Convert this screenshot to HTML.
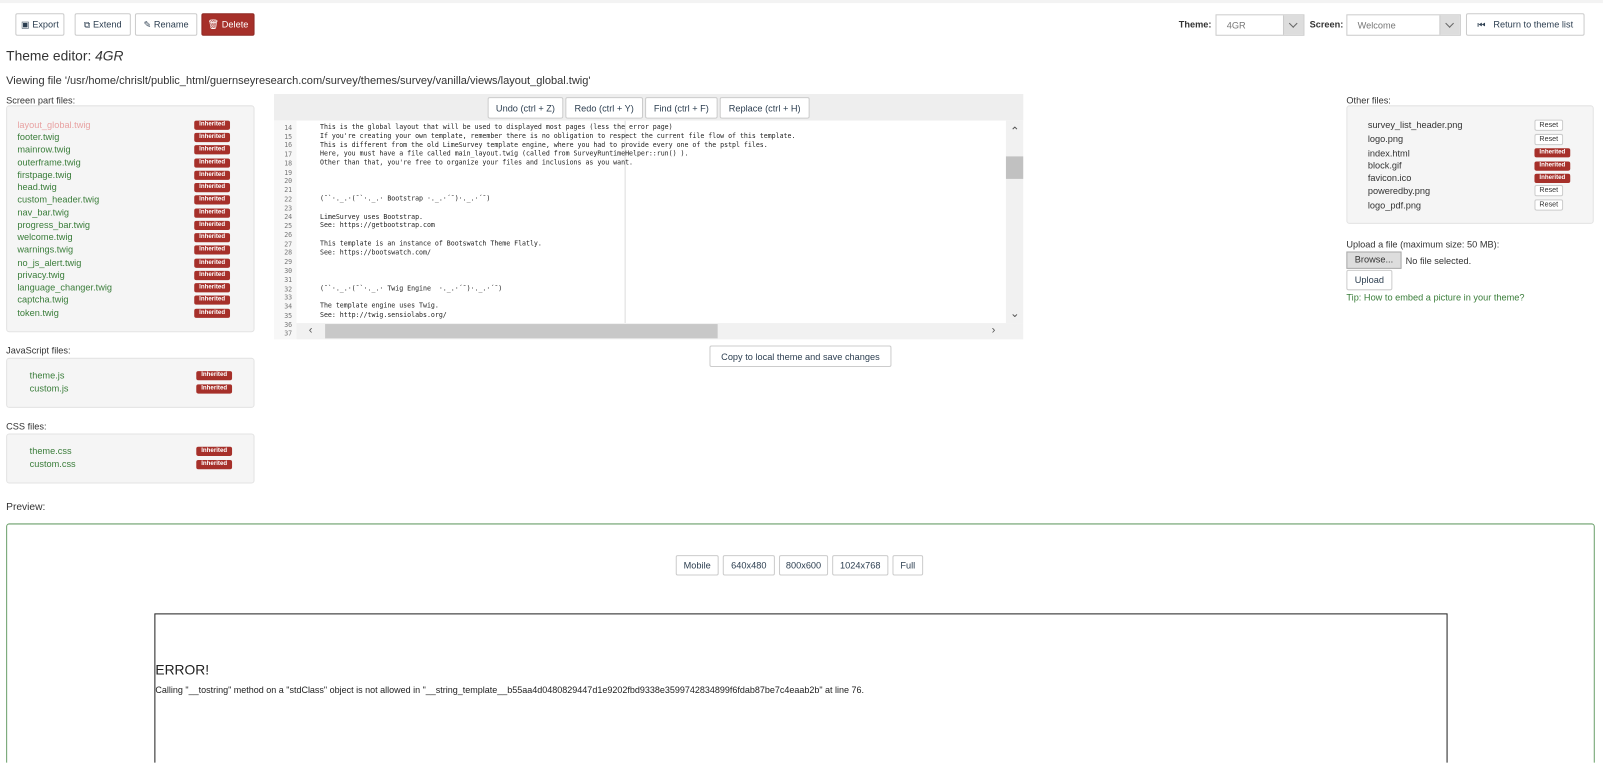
<!DOCTYPE html>
<html><head><meta charset="utf-8"><style>
*{box-sizing:border-box;margin:0;padding:0}
html,body{width:1603px;height:763px;overflow:hidden;background:#fff}
#w{position:absolute;left:0;top:0;width:1568px;height:746px;overflow:hidden;transform:scale(1.0223);transform-origin:0 0;font-family:"Liberation Sans",sans-serif;color:#333;font-size:9px}
.a{position:absolute}
.btn{position:absolute;border:1px solid #ccc;border-radius:2px;background:#fff;font-size:9px;color:#2c3e50;display:flex;align-items:center;justify-content:center;white-space:nowrap}
.red{background:#a6302a;color:#fff;border-color:#8e2823}
.panel{position:absolute;background:#f5f5f5;border:1px solid #e3e3e3;border-radius:3px}
.g{position:absolute;color:#3a7d3a;font-size:9px}
.bd{position:absolute;background:#a6302a;color:#fff;font-size:6px;font-weight:bold;width:35px;height:9px;line-height:9px;text-align:center;border-radius:2px}
.rs{position:absolute;background:#fff;border:1px solid #ccc;color:#333;font-size:7px;width:28px;height:11px;line-height:9px;text-align:center;border-radius:2px}
.lbl{position:absolute;font-size:9px;color:#333}
.code{position:absolute;font-family:"DejaVu Sans Mono","Liberation Mono",monospace;font-size:6.45px;line-height:8.76px;white-space:pre;color:#222}
.sel{position:absolute;border:1px solid #ccc;background:#fff;font-size:9px;color:#777;padding-left:10px;display:flex;align-items:center}
.sel i{position:absolute;right:0;top:0;bottom:0;width:20px;background:#ddd;border-left:1px solid #ccc}
.sel i:after{content:"";position:absolute;left:6px;top:5px;width:5px;height:5px;border-right:1.5px solid #666;border-bottom:1.5px solid #666;transform:rotate(45deg)}
</style></head><body><div id="w">
<div class="a" style="left:0;top:0;width:1568px;height:3px;background:#f3f3f3"></div>
<div class="btn" style="left:15px;top:13px;width:48px;height:22px">&#9635; Export</div>
<div class="btn" style="left:73px;top:13px;width:55px;height:22px">&#10697; Extend</div>
<div class="btn" style="left:132px;top:13px;width:61px;height:22px">&#9998; Rename</div>
<div class="btn red" style="left:197px;top:13px;width:52px;height:22px">&#128465; Delete</div>

<div class="lbl" style="left:1153px;top:19px;font-weight:bold">Theme:</div>
<div class="sel" style="left:1189px;top:14px;width:87px;height:21px">4GR<i></i></div>
<div class="lbl" style="left:1281px;top:19px;font-weight:bold">Screen:</div>
<div class="sel" style="left:1317px;top:14px;width:112px;height:21px">Welcome<i></i></div>
<div class="btn" style="left:1434px;top:13px;width:116px;height:22px">&#9198;&nbsp;&nbsp;&nbsp;Return to theme list</div>

<div class="a" style="left:6px;top:47px;font-size:13.5px;color:#333">Theme editor: <i>4GR</i></div>
<div class="a" style="left:6px;top:73px;font-size:10.8px;color:#333">Viewing file '/usr/home/chrislt/public_html/guernseyresearch.com/survey/themes/survey/vanilla/views/layout_global.twig'</div>

<div class="lbl" style="left:6px;top:93px">Screen part files:</div>
<div class="panel" style="left:6px;top:103px;width:243px;height:222px"></div>
<div class="g" style="left:17px;top:117px;color:#e8a3a3">layout_global.twig</div>
<div class="g" style="left:17px;top:129px">footer.twig</div>
<div class="g" style="left:17px;top:141px">mainrow.twig</div>
<div class="g" style="left:17px;top:154px">outerframe.twig</div>
<div class="g" style="left:17px;top:166px">firstpage.twig</div>
<div class="g" style="left:17px;top:178px">head.twig</div>
<div class="g" style="left:17px;top:190px">custom_header.twig</div>
<div class="g" style="left:17px;top:203px">nav_bar.twig</div>
<div class="g" style="left:17px;top:215px">progress_bar.twig</div>
<div class="g" style="left:17px;top:227px">welcome.twig</div>
<div class="g" style="left:17px;top:239px">warnings.twig</div>
<div class="g" style="left:17px;top:252px">no_js_alert.twig</div>
<div class="g" style="left:17px;top:264px">privacy.twig</div>
<div class="g" style="left:17px;top:276px">language_changer.twig</div>
<div class="g" style="left:17px;top:288px">captcha.twig</div>
<div class="g" style="left:17px;top:301px">token.twig</div>
<div class="bd" style="left:190px;top:118px">Inherited</div>
<div class="bd" style="left:190px;top:130px">Inherited</div>
<div class="bd" style="left:190px;top:142px">Inherited</div>
<div class="bd" style="left:190px;top:155px">Inherited</div>
<div class="bd" style="left:190px;top:167px">Inherited</div>
<div class="bd" style="left:190px;top:179px">Inherited</div>
<div class="bd" style="left:190px;top:191px">Inherited</div>
<div class="bd" style="left:190px;top:204px">Inherited</div>
<div class="bd" style="left:190px;top:216px">Inherited</div>
<div class="bd" style="left:190px;top:228px">Inherited</div>
<div class="bd" style="left:190px;top:240px">Inherited</div>
<div class="bd" style="left:190px;top:253px">Inherited</div>
<div class="bd" style="left:190px;top:265px">Inherited</div>
<div class="bd" style="left:190px;top:277px">Inherited</div>
<div class="bd" style="left:190px;top:289px">Inherited</div>
<div class="bd" style="left:190px;top:302px">Inherited</div>

<div class="lbl" style="left:6px;top:338px">JavaScript files:</div>
<div class="panel" style="left:6px;top:350px;width:243px;height:49px"></div>
<div class="g" style="left:29px;top:362px">theme.js</div>
<div class="g" style="left:29px;top:375px">custom.js</div>
<div class="bd" style="left:192px;top:363px">Inherited</div>
<div class="bd" style="left:192px;top:376px">Inherited</div>

<div class="lbl" style="left:6px;top:412px">CSS files:</div>
<div class="panel" style="left:6px;top:424px;width:243px;height:49px"></div>
<div class="g" style="left:29px;top:436px">theme.css</div>
<div class="g" style="left:29px;top:449px">custom.css</div>
<div class="bd" style="left:192px;top:437px">Inherited</div>
<div class="bd" style="left:192px;top:450px">Inherited</div>

<div class="a" style="left:268px;top:92px;width:733px;height:26px;background:#eee"></div>
<div class="btn" style="left:477px;top:95px;width:74px;height:21px">Undo (ctrl + Z)</div>
<div class="btn" style="left:553px;top:95px;width:76px;height:21px">Redo (ctrl + Y)</div>
<div class="btn" style="left:631px;top:95px;width:71px;height:21px">Find (ctrl + F)</div>
<div class="btn" style="left:704px;top:95px;width:88px;height:21px">Replace (ctrl + H)</div>
<div class="a" style="left:268px;top:118px;width:733px;height:214px;background:#fff;overflow:hidden">
<div class="a" style="left:0;top:0;width:22px;height:214px;background:#f7f7f7"></div>
<div class="a" style="left:343px;top:0;width:1px;height:198px;background:#ddd"></div>
<div class="code" style="left:10px;top:-6px;color:#777">13
14
15
16
17
18
19
20
21
22
23
24
25
26
27
28
29
30
31
32
33
34
35
36
37</div>
<div class="code" style="left:45px;top:2px">This is the global layout that will be used to displayed most pages (less the error page)
If you're creating your own template, remember there is no obligation to respect the current file flow of this template.
This is different from the old LimeSurvey template engine, where you had to provide every one of the pstpl files.
Here, you must have a file called main_layout.twig (called from SurveyRuntimeHelper::run() ).
Other than that, you're free to organize your files and inclusions as you want.



(¯`·._.·(¯`·._.· Bootstrap ·._.·´¯)·._.·´¯)

LimeSurvey uses Bootstrap.
See: https://getbootstrap.com

This template is an instance of Bootswatch Theme Flatly.
See: https://bootswatch.com/



(¯`·._.·(¯`·._.· Twig Engine  ·._.·´¯)·._.·´¯)

The template engine uses Twig.
See: http://twig.sensiolabs.org/</div>
<div class="a" style="left:716px;top:0;width:17px;height:198px;background:#f1f1f1"></div>
<div class="a" style="left:716px;top:35px;width:17px;height:22px;background:#c1c1c1"></div>
<div class="a" style="left:720px;top:4px;font-size:11px;color:#555">&#8963;</div>
<div class="a" style="left:720px;top:182px;font-size:11px;color:#555">&#8964;</div>
<div class="a" style="left:22px;top:198px;width:711px;height:16px;background:#f1f1f1"></div>
<div class="a" style="left:50px;top:199px;width:384px;height:14px;background:#c8c8c8"></div>
<div class="a" style="left:34px;top:199px;font-size:11px;color:#555">&#8249;</div>
<div class="a" style="left:702px;top:199px;font-size:11px;color:#555">&#8250;</div>
</div>
<div class="btn" style="left:694px;top:338px;width:178px;height:21px">Copy to local theme and save changes</div>

<div class="lbl" style="left:1317px;top:93px">Other files:</div>
<div class="panel" style="left:1317px;top:103px;width:242px;height:116px"></div>
<div class="a" style="left:1338px;top:117px;font-size:9px">survey_list_header.png</div>
<div class="a" style="left:1338px;top:131px;font-size:9px">logo.png</div>
<div class="a" style="left:1338px;top:145px;font-size:9px">index.html</div>
<div class="a" style="left:1338px;top:157px;font-size:9px">block.gif</div>
<div class="a" style="left:1338px;top:169px;font-size:9px">favicon.ico</div>
<div class="a" style="left:1338px;top:182px;font-size:9px">poweredby.png</div>
<div class="a" style="left:1338px;top:196px;font-size:9px">logo_pdf.png</div>
<div class="rs" style="left:1501px;top:117px">Reset</div>
<div class="rs" style="left:1501px;top:131px">Reset</div>
<div class="bd" style="left:1501px;top:145px">Inherited</div>
<div class="bd" style="left:1501px;top:158px">Inherited</div>
<div class="bd" style="left:1501px;top:170px">Inherited</div>
<div class="rs" style="left:1501px;top:181px">Reset</div>
<div class="rs" style="left:1501px;top:195px">Reset</div>
<div class="lbl" style="left:1317px;top:234px">Upload a file (maximum size: 50 MB):</div>
<div class="a" style="left:1317px;top:246px;width:54px;height:17px;background:#ddd;border:1px solid #aaa;font-size:9px;text-align:center;line-height:15px">Browse...</div>
<div class="lbl" style="left:1375px;top:250px">No file selected.</div>
<div class="btn" style="left:1317px;top:264px;width:45px;height:20px">Upload</div>
<div class="a" style="left:1317px;top:286px;font-size:9px;color:#3a7d3a">Tip: How to embed a picture in your theme?</div>

<div class="a" style="left:6px;top:491px;font-size:10px">Preview:</div>
<div class="a" style="left:6px;top:512px;width:1554px;height:300px;border:1px solid #6a9f6a;border-radius:3px"></div>
<div class="btn" style="left:661px;top:543px;width:42px;height:20px">Mobile</div>
<div class="btn" style="left:707px;top:543px;width:51px;height:20px">640x480</div>
<div class="btn" style="left:762px;top:543px;width:48px;height:20px">800x600</div>
<div class="btn" style="left:814px;top:543px;width:55px;height:20px">1024x768</div>
<div class="btn" style="left:873px;top:543px;width:30px;height:20px">Full</div>
<div class="a" style="left:151px;top:600px;width:1265px;height:200px;border:1px solid #222"></div>
<div class="a" style="left:152px;top:648px;font-size:13.5px;color:#222">ERROR!</div>
<div class="a" style="left:152px;top:670px;font-size:8.8px;color:#222">Calling "__tostring" method on a "stdClass" object is not allowed in "__string_template__b55aa4d0480829447d1e9202fbd9338e3599742834899f6fdab87be7c4eaab2b" at line 76.</div>
</div></body></html>
